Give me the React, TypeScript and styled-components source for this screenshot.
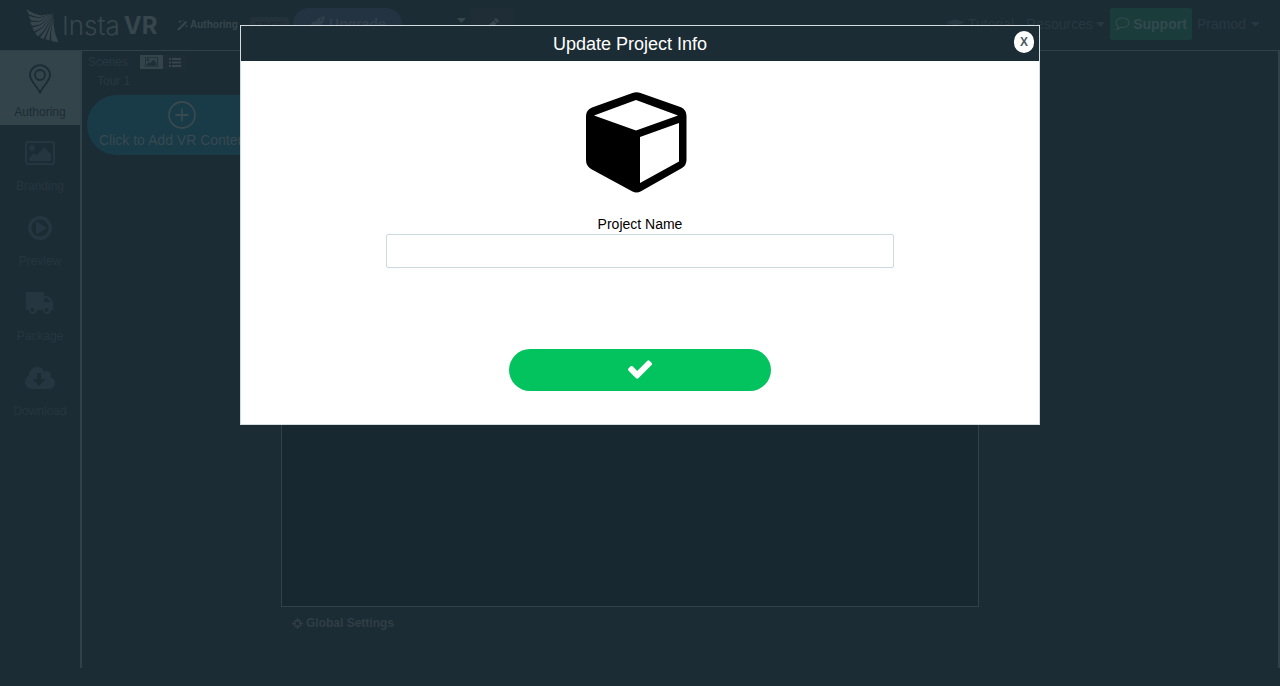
import React from "react";
import styled, { createGlobalStyle } from "styled-components";
import { FaGraduationCap } from "react-icons/fa";

const c = {
  bg: "#1c2c34",
  stage: "#182830",
  line: "#31414a",
  active: "#34444b",
  faint: "#283842",
  mid: "#37464d",
};

const GlobalStyle = createGlobalStyle`
  *, *::before, *::after { box-sizing: border-box; }
  body {
    margin: 0;
    background: ${c.bg};
    color: ${c.faint};
    font-family: "Helvetica Neue", Helvetica, "Liberation Sans", Arial, sans-serif;
    font-size: 14px;
    line-height: 20px;
  }
  button, input { font: inherit; color: inherit; margin: 0; }
  button { border: 0; padding: 0; background: none; cursor: pointer; }
  a { color: inherit; text-decoration: none; }
  svg { display: block; flex: none; }
`;

const Page = styled.div`
  display: flex;
  flex-direction: column;
  min-height: 100vh;
  padding-bottom: 18px;
`;

const TopBar = styled.header`
  display: flex;
  justify-content: space-between;
  height: 51px;
  padding: 0 20px 0 25px;
  border-bottom: 1px solid ${c.line};
`;

const BarGroup = styled.div`
  display: flex;
  align-items: flex-start;
  padding-top: 8px;
`;

const Logo = styled.a`
  display: flex;
  align-items: center;
  width: 152px;
  height: 36px;
  gap: 3px;
  color: ${c.mid};
`;

const Wordmark = styled.span`
  display: flex;
  gap: 4px;
  font-family: Inter, sans-serif;
  font-size: 26px;
  line-height: 36px;
  font-weight: 300;
  white-space: nowrap;

  b {
    font-size: 24px;
    font-weight: 700;
  }
`;

const Mode = styled.span`
  display: flex;
  align-items: center;
  gap: 2px;
  width: 73px;
  height: 34px;
  color: ${c.mid};
  font-size: 10px;
  font-weight: 700;
`;

const Badge = styled.span`
  width: 39px;
  height: 18px;
  margin: 9px 4px 0 0;
  border-radius: 3px;
  background: #23323a;
  color: #1b2a32;
  font-size: 11px;
  font-weight: 700;
  line-height: 18px;
  text-align: center;
`;

const UpgradeButton = styled.button`
  display: flex;
  align-items: center;
  justify-content: center;
  gap: 4px;
  width: 109px;
  height: 32px;
  border-radius: 16px;
  background: #233342;
  color: #303f4a;
  font-weight: 700;
`;

const CaretButton = styled.button`
  display: flex;
  align-items: center;
  justify-content: flex-end;
  width: 64px;
  height: 24px;
  color: ${c.mid};
`;

const EditButton = styled.button`
  display: flex;
  align-items: center;
  justify-content: center;
  width: 43px;
  height: 32px;
  margin-left: 5px;
  background: #1f2e36;
  color: ${c.mid};
`;

const NavLink = styled.a<{ $gap: number; $end?: number }>`
  display: flex;
  align-items: center;
  gap: ${(p) => p.$gap}px;
  height: 32px;
  margin-right: ${(p) => p.$end ?? 0}px;
`;

const SupportButton = styled.button`
  display: flex;
  align-items: center;
  justify-content: center;
  gap: 3px;
  width: 82px;
  height: 32px;
  margin-right: 5px;
  border-radius: 2px;
  background: #1a3c3b;
  color: #33494d;
  font-weight: 700;
`;

const Workspace = styled.div`
  display: flex;
  flex: 1;
  border-right: 2px solid ${c.line};
`;

const Sidebar = styled.nav`
  width: 82px;
  border-right: 2px solid ${c.line};
`;

const SideItem = styled.a<{ $active?: boolean }>`
  display: flex;
  flex-direction: column;
  align-items: center;
  height: ${(p) => (p.$active ? 74 : 75)}px;
  background: ${(p) => (p.$active ? c.active : "transparent")};
  color: ${(p) => (p.$active ? c.bg : "#263640")};
  font-size: 12px;
`;

const SideIcon = styled.span`
  display: flex;
  align-items: center;
  height: 51px;
  padding-top: 4px;
`;

const ScenePanel = styled.section`
  width: 199px;
  padding: 4px 4px 0 5px;
  font-size: 12px;
`;

const SceneHead = styled.div`
  display: flex;
  align-items: flex-start;
  height: 17px;
  line-height: 15px;
`;

const SceneTitle = styled.span`
  width: 53px;
  padding-left: 1px;
`;

const ViewButton = styled.button<{ $on?: boolean }>`
  display: flex;
  align-items: center;
  justify-content: center;
  width: 23px;
  height: 14px;
  background: ${(p) => (p.$on ? "#34444b" : "#1f2e36")};
  color: ${(p) => (p.$on ? "#1f2f37" : "#35444d")};
`;

const TourName = styled.div`
  padding-left: 10px;
  margin-bottom: 4px;
  line-height: 19px;
`;

const AddButton = styled.button`
  display: flex;
  flex-direction: column;
  align-items: center;
  gap: 1px;
  width: 100%;
  height: 60px;
  padding: 6px 12px 0;
  border-radius: 30px;
  background: #193a47;
  color: #38494f;
  font-size: 14px;
  white-space: nowrap;
`;

const AddLabel = styled.span`
  align-self: flex-start;
`;

const Editor = styled.main`
  display: flex;
  flex: 1;
  flex-direction: column;
`;

const Stage = styled.div`
  flex: 1;
  border: 1px solid ${c.line};
  background: ${c.stage};
`;

const StageFooter = styled.div`
  height: 61px;
  padding: 6px 11px;
`;

const SettingsButton = styled.button`
  display: flex;
  align-items: center;
  gap: 3px;
  color: #2f3e46;
  font-size: 12px;
  font-weight: 700;
`;

const Properties = styled.aside`
  width: 299px;
`;

const Overlay = styled.div`
  position: fixed;
  inset: 0;
  display: flex;
  align-items: flex-start;
  justify-content: center;
  padding-top: 25px;
`;

const Dialog = styled.section`
  width: 800px;
  max-width: 100%;
  border: 1px solid #d3dde0;
  background: #fff;
  color: #000;
`;

const DialogHead = styled.header`
  display: flex;
  align-items: center;
  height: 35px;
  padding: 0 5px;
  background: ${c.bg};
  color: #fff;
`;

const DialogTitle = styled.h1`
  flex: 1;
  margin: 0;
  font-size: 18px;
  font-weight: 400;
  line-height: 36px;
  text-align: center;
`;

const CloseButton = styled.button`
  width: 20px;
  height: 22px;
  margin-bottom: 3px;
  border-radius: 10px;
  background: #fff;
  color: #4d5960;
  font-size: 12px;
  font-weight: 700;
  line-height: 22px;
`;

const DialogForm = styled.form`
  display: flex;
  flex-direction: column;
  align-items: center;
  padding: 31px 20px 33px;
`;

const FieldLabel = styled.label`
  margin-top: 21px;
`;

const NameInput = styled.input`
  width: 508px;
  max-width: 100%;
  height: 34px;
  padding: 6px 12px;
  border: 1px solid #ccd9de;
  border-radius: 2px;
  background: #fff;
  outline: none;
`;

const ConfirmButton = styled.button`
  display: flex;
  align-items: center;
  justify-content: center;
  width: 262px;
  height: 42px;
  margin-top: 81px;
  padding-bottom: 2px;
  border-radius: 21px;
  background: #03c35f;
  color: #fff;
`;

const Caret = () => (
  <svg width="9" height="5" viewBox="0 0 9 5" fill="currentColor" aria-hidden="true">
    <path d="M0 0h9L4.500 5z" />
  </svg>
);

const WingMark = () => (
  <svg width="34" height="34" viewBox="0 0 34 34" fill="currentColor" aria-hidden="true">
    <path d="M1 0 9 4.500 16 6.500 28.500 4.500 14 8.500 4 5.500zM3.500 7 14 9.300 28.500 4.800 14 12 6 11.500zM5 13 14 12.800 28.500 5 15 15.500 7 17zM7.500 18.500 15.500 16.200 28.500 5 17 18.500 9 22.500zM10 24 17.500 19 28.500 5.500 19 21.500 13 27.500zM15 28.500 20 22 28.500 6 22 23 18.500 30zM20.500 30.300 23 23.500 28.500 7 25 24 24.500 31.500zM26.500 32 26 24 28.500 8 28.500 15 30 24 33.500 33.500z" />
  </svg>
);

const WandIcon = () => (
  <svg width="11" height="11" viewBox="0 0 11 11" fill="none" stroke="currentColor" aria-hidden="true">
    <path d="M1 10 9.500 1.500" strokeWidth="2" />
    <path d="M3 0v3M1.500 1.500h3M6 0v1.500M9.500 5v2M8.500 6h2" strokeWidth=".8" />
  </svg>
);

const RocketIcon = () => (
  <svg width="16" height="16" viewBox="0 0 16 16" fill="currentColor" fillRule="evenodd" aria-hidden="true">
    <path d="M15.700.3C16 4 14.500 7 11.500 9.500L11 13l-3.500 2.500-.5-.5.6-3L5 9.300l-3.500.6-.5-.5L3.500 6 7 5.300C9 2 12 .3 15.700.3zM12.200 2.800a1 1 0 1 0 0 2 1 1 0 0 0 0-2zM3.500 10.500l2.300 2.300C5 14.500 3 15.300.7 15.300.7 13 1.500 11 3.500 10.500z" />
  </svg>
);

const PencilIcon = () => (
  <svg width="13" height="13" viewBox="0 0 13 13" fill="currentColor" aria-hidden="true">
    <path d="M9.400.3Q10-.1 10.500.4l2.100 2.100q.5.600 0 1.100L11.300 4.900 8.100 1.700zM7.400 2.400l3.200 3.200-7.300 7.300H0V9.700z" />
  </svg>
);

const PinIcon = () => (
  <svg width="22" height="30" viewBox="0 0 22 30" fill="none" stroke="currentColor" strokeWidth="1.800" aria-hidden="true">
    <path d="M11 28.500C8 22 1 17 1 11a10 9.800 0 0 1 20 0C21 17 14 22 11 28.500z" />
    <circle cx="11" cy="11" r="5" />
  </svg>
);

const ImageIcon = ({ width }: { width: number }) => (
  <svg width={width} viewBox="0 128 1920 1536" fill="currentColor" aria-hidden="true">
    <path d="M640 576q0 80-56 136t-136 56-136-56-56-136 56-136 136-56 136 56 56 136zm1024 384v448h-1408v-192l320-320 160 160 512-512zm96-704h-1600q-13 0-22.500 9.500t-9.500 22.500v1216q0 13 9.500 22.500t22.500 9.500h1600q13 0 22.500-9.500t9.500-22.500v-1216q0-13-9.500-22.500t-22.500-9.500zm160 32v1216q0 66-47 113t-113 47h-1600q-66 0-113-47t-47-113v-1216q0-66 47-113t113-47h1600q66 0 113 47t47 113z" />
  </svg>
);

const PlayIcon = () => (
  <svg width="24" height="24" viewBox="0 128 1536 1536" fill="currentColor" aria-hidden="true">
    <path d="M1184 896q0 37-32 55l-544 320q-15 9-32 9-16 0-32-8-32-19-32-56v-640q0-37 32-56 33-18 64 1l544 320q32 18 32 55zm128 0q0-148-73-273t-198-198-273-73-273 73-198 198-73 273 73 273 198 198 273 73 273-73 198-198 73-273zm224 0q0 209-103 385.500t-279.500 279.500-385.500 103-385.500-103-279.500-279.500-103-385.500 103-385.500 279.500-279.500 385.500-103 385.500 103 279.500 279.500 103 385.500z" />
  </svg>
);

const TruckIcon = () => (
  <svg width="28" height="22" viewBox="0 0 28 22" fill="currentColor" fillRule="evenodd" aria-hidden="true">
    <path d="M1 0h16q1 0 1 1v3h3q1 0 2 1l3 3q1 1 1 2v7q1 0 1 1h-3a4 4 0 0 1-8 0h-6a4 4 0 0 1-8 0H1q-1 0-1-1V1q0-1 1-1zM18 6v4h7l-4-4zM6.500 16a2 2 0 1 0 0 4 2 2 0 0 0 0-4zM20.500 16a2 2 0 1 0 0 4 2 2 0 0 0 0-4z" />
  </svg>
);

const CloudIcon = () => (
  <svg width="30" height="22" viewBox="0 128 1920 1408" fill="currentColor" aria-hidden="true">
    <path d="M1280 928q0-14-9-23t-23-9h-224v-352q0-13-9.500-22.500t-22.500-9.500h-192q-13 0-22.500 9.500t-9.500 22.500v352h-224q-13 0-22.500 9.500t-9.500 22.500q0 14 9 23l352 352q9 9 23 9t23-9l351-351q10-12 10-24zm640 224q0 159-112.500 271.500t-271.500 112.500h-1088q-185 0-316.500-131.500t-131.500-316.500q0-130 70-240t188-165q-2-30-2-43 0-212 150-362t362-150q156 0 285.500 87t188.500 231q71-62 166-62 106 0 181 75t75 181q0 76-41 138 130 31 213.500 135.500t83.500 238.500z" />
  </svg>
);

const ListIcon = () => (
  <svg width="12" height="9" viewBox="0 0 12 9" fill="currentColor" aria-hidden="true">
    <path d="M0 0h2v2H0zM3 0h9v2H3zM0 3.500h2v2H0zM3 3.500h9v2H3zM0 7h2v2H0zM3 7h9v2H3z" />
  </svg>
);

const PlusCircle = () => (
  <svg width="28" height="28" viewBox="0 0 28 28" fill="none" stroke="currentColor" strokeWidth="1.800" aria-hidden="true">
    <circle cx="14" cy="14" r="13" />
    <path d="M14 7.500v13M7.500 14h13" />
  </svg>
);

const BubbleIcon = () => (
  <svg width="15" height="14" viewBox="0 0 15 14" fill="none" stroke="currentColor" strokeWidth="1.200" aria-hidden="true">
    <path d="M7.500 1c3.600 0 6.500 2 6.500 4.700s-2.900 4.800-6.500 4.800c-.7 0-1.300 0-1.900-.2C4.500 11.500 3.200 12 2 12.200c.7-.7 1.100-1.600 1.200-2.700C1.800 8.600 1 7.300 1 5.700 1 3 3.900 1 7.500 1z" />
  </svg>
);

const TargetIcon = () => (
  <svg width="11" height="11" viewBox="0 0 11 11" fill="none" stroke="currentColor" strokeWidth="1.500" aria-hidden="true">
    <circle cx="5.500" cy="5.500" r="3.300" />
    <path d="M5.500 0v4M5.500 7v4M0 5.500h4M7 5.500h4" />
  </svg>
);

const CubeIcon = () => (
  <svg width="108" height="101" viewBox="0 0 108 101" fillRule="evenodd" aria-hidden="true">
    <path d="M46.500 .9Q50.500-.6 54.500 .9L95 15.200Q100.500 18 100.500 24V68Q100.500 73 96 76L55 99.300Q50.500 101.700 46 99.300L5 77Q0 74 0 68V24Q0 18 6 15.500ZM8 23.500 50 38.500 92 23.500 50 8ZM54 45V91L93 69.500V31Z" />
  </svg>
);

const CheckIcon = () => (
  <svg width="24" height="19" viewBox="121 334 1550 1188" fill="currentColor" aria-hidden="true">
    <path d="M1671 566q0 40-28 68l-724 724-136 136q-28 28-68 28t-68-28l-136-136-362-362q-28-28-28-68t28-68l136-136q28-28 68-28t68 28l294 295 656-657q28-28 68-28t68 28l136 136q28 28 28 68z" />
  </svg>
);

const sections = [
  { name: "Authoring", icon: <PinIcon />, active: true },
  { name: "Branding", icon: <ImageIcon width={30} /> },
  { name: "Preview", icon: <PlayIcon /> },
  { name: "Package", icon: <TruckIcon /> },
  { name: "Download", icon: <CloudIcon /> },
];

export default function App() {
  return (
    <>
      <GlobalStyle />
      <Page>
        <TopBar>
          <BarGroup>
            <Logo href="#">
              <WingMark />
              <Wordmark>Insta<b>VR</b></Wordmark>
            </Logo>
            <Mode><WandIcon />Authoring</Mode>
            <Badge>FREE</Badge>
            <UpgradeButton type="button"><RocketIcon />Upgrade</UpgradeButton>
            <CaretButton type="button" aria-label="Choose project"><Caret /></CaretButton>
            <EditButton type="button" aria-label="Edit project"><PencilIcon /></EditButton>
          </BarGroup>
          <BarGroup>
            <NavLink href="#" $gap={4} $end={12}><FaGraduationCap size={17} />Tutorial</NavLink>
            <NavLink href="#" $gap={3} $end={5}>Resources<Caret /></NavLink>
            <SupportButton type="button"><BubbleIcon />Support</SupportButton>
            <NavLink href="#" $gap={5}>Pramod<Caret /></NavLink>
          </BarGroup>
        </TopBar>
        <Workspace>
          <Sidebar>
            {sections.map((s) => (
              <SideItem key={s.name} href="#" $active={s.active}>
                <SideIcon>{s.icon}</SideIcon>
                {s.name}
              </SideItem>
            ))}
          </Sidebar>
          <ScenePanel>
            <SceneHead>
              <SceneTitle>Scenes</SceneTitle>
              <ViewButton type="button" aria-label="Thumbnails" $on><ImageIcon width={13} /></ViewButton>
              <ViewButton type="button" aria-label="List"><ListIcon /></ViewButton>
            </SceneHead>
            <TourName>Tour 1</TourName>
            <AddButton type="button"><PlusCircle /><AddLabel>Click to Add VR Content</AddLabel></AddButton>
          </ScenePanel>
          <Editor>
            <Stage />
            <StageFooter>
              <SettingsButton type="button"><TargetIcon />Global Settings</SettingsButton>
            </StageFooter>
          </Editor>
          <Properties />
        </Workspace>
      </Page>
      <Overlay>
        <Dialog role="dialog" aria-modal="true" aria-labelledby="dialog-title">
          <DialogHead>
            <DialogTitle id="dialog-title">Update Project Info</DialogTitle>
            <CloseButton type="button" aria-label="Close">X</CloseButton>
          </DialogHead>
          <DialogForm onSubmit={(e) => e.preventDefault()}>
            <CubeIcon />
            <FieldLabel htmlFor="project-name">Project Name</FieldLabel>
            <NameInput id="project-name" type="text" />
            <ConfirmButton type="submit" aria-label="Save"><CheckIcon /></ConfirmButton>
          </DialogForm>
        </Dialog>
      </Overlay>
    </>
  );
}
